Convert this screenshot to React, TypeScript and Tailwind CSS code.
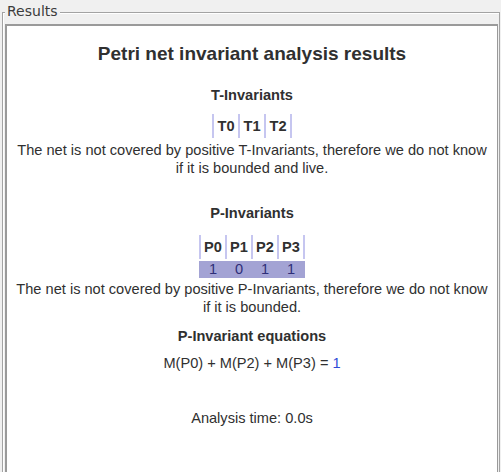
const T_HEADERS = ['T0', 'T1', 'T2'];
const P_HEADERS = ['P0', 'P1', 'P2', 'P3'];
const P_VALUES = [1, 0, 1, 1];

const InvariantTable = ({ headers, values }: { headers: string[]; values?: number[] }) => (
  <div className="flex flex-col items-center">
    <div className="flex h-[24px]">
      {headers.map((h, i) => (
        <div
          key={h}
          className={`flex items-center justify-center border-l-2 border-[#c6c6f0] font-bold ${
            i === headers.length - 1 ? 'w-[28px] border-r-2' : 'w-[26px]'
          }`}
        >
          {h}
        </div>
      ))}
    </div>
    {values && (
      <div className="mt-[2px] flex h-[17px] bg-[#a3a3d4] leading-[17px] text-[#2e2e78]">
        {values.map((v, i) => (
          <div
            key={i}
            className={`pl-[2px] text-center ${i === values.length - 1 ? 'w-[28px] pr-[2px]' : 'w-[26px]'}`}
          >
            {v}
          </div>
        ))}
      </div>
    )}
  </div>
);

export default function App() {
  return (
    <div className="h-[472px] w-[501px] overflow-hidden bg-[#f0f0f0] pl-[2px] pr-[1px] pt-[12px]">
      <div className="relative flex h-[460px] flex-col border-l border-r border-t border-[#a3a3a3] shadow-[inset_1px_1px_0_#ffffff]">
        {/* Titled border label */}
        <div className="absolute left-[2px] top-[-10px] bg-[#f0f0f0] px-[2px] font-['DejaVu_Sans',sans-serif] text-[14px] leading-[17px] text-[#3c3c3c]">
          Results
        </div>

        <div className="ml-[2px] mr-[1px] mt-[11px] flex-1 border-l-2 border-r border-t-2 border-[#9a9a9a] bg-white">
          <div className="flex flex-col items-center px-[6px] pt-[17px] text-center font-['Liberation_Sans',Arial,sans-serif] text-[14.6px] leading-[18px] text-[#303030]">
            <h1 className="text-[19px] font-bold leading-[22px]">Petri net invariant analysis results</h1>

            <h2 className="mt-[21px] font-bold">T-Invariants</h2>
            <div className="mt-[10px]">
              <InvariantTable headers={T_HEADERS} />
            </div>
            <p className="mt-[3px]">
              The net is not covered by positive T-Invariants, therefore we do not know if it is bounded and live.
            </p>

            <h2 className="mt-[27px] font-bold">P-Invariants</h2>
            <div className="mt-[13px]">
              <InvariantTable headers={P_HEADERS} values={P_VALUES} />
            </div>
            <p className="mt-[2px]">
              The net is not covered by positive P-Invariants, therefore we do not know if it is bounded.
            </p>

            <h2 className="mt-[11px] font-bold">P-Invariant equations</h2>
            <p className="mt-[9px]">
              M(P0) + M(P2) + M(P3) = <span className="text-[#2f4ad6]">1</span>
            </p>

            <p className="mt-[37px]">Analysis time: 0.0s</p>
          </div>
        </div>
      </div>
    </div>
  );
}
